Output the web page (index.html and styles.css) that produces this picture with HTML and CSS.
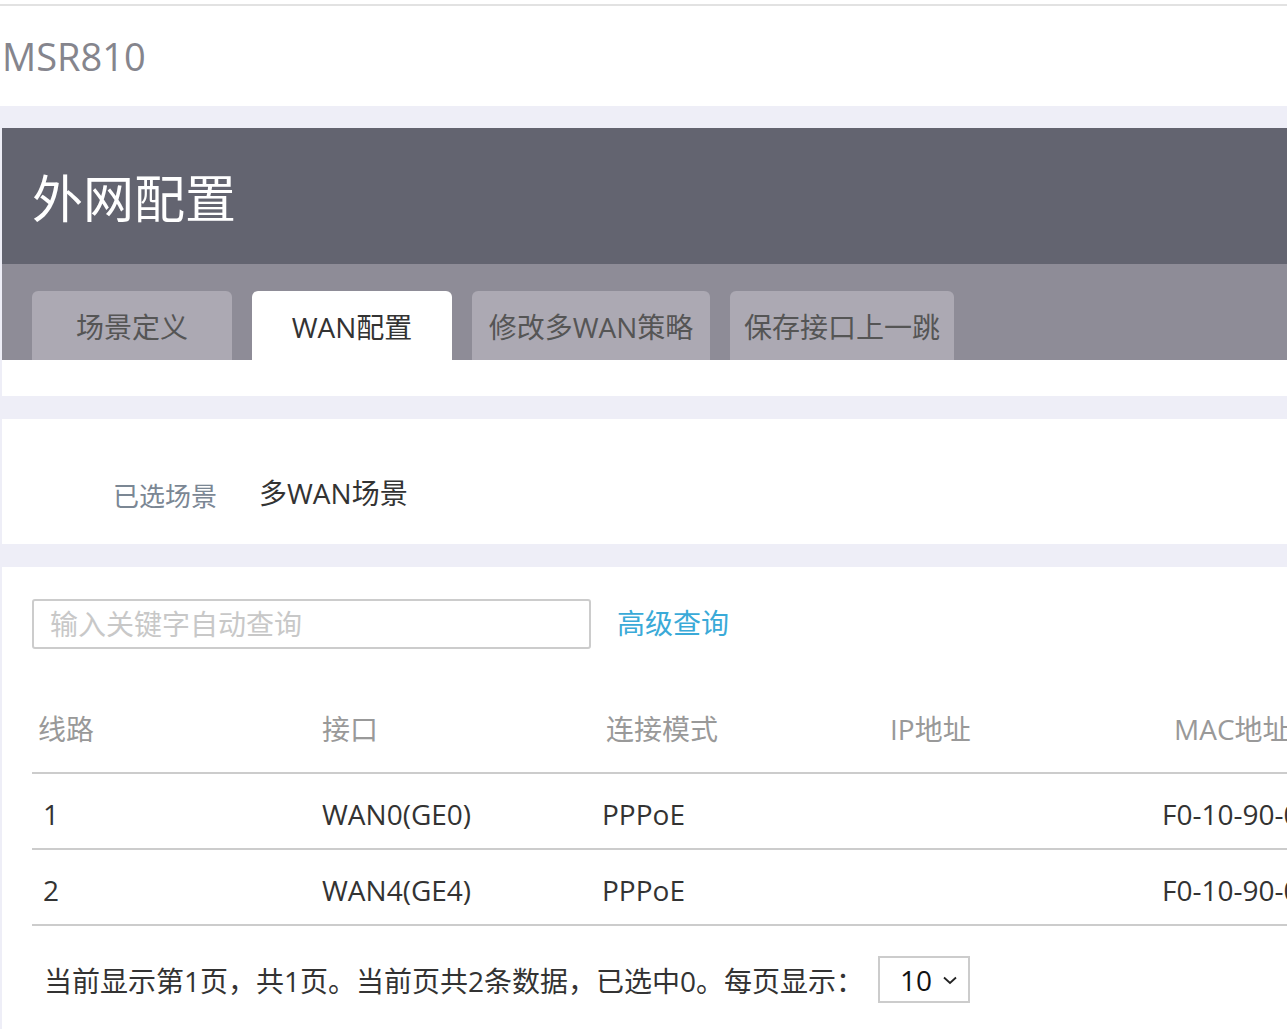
FILE: index.html
```html
<!DOCTYPE html>
<html lang="zh-CN">
<head>
    <meta charset="UTF-8">
    <meta name="viewport" content="width=device-width, initial-scale=1.0">
    <title>MSR810 - 外网配置</title>
    <link rel="stylesheet" href="styles.css">
</head>
<body>
    <div class="topbar">
        <div class="device-name">MSR810</div>
    </div>

    <div class="page">
        <!-- Page header with tabs -->
        <div class="card header-card">
            <div class="page-title">外网配置</div>
            <div class="tab-bar">
                <div class="tab">场景定义</div>
                <div class="tab active">WAN配置</div>
                <div class="tab wide">修改多WAN策略</div>
                <div class="tab medium">保存接口上一跳</div>
            </div>
            <div class="tab-spacer"></div>
        </div>

        <!-- Selected scene -->
        <div class="card scene-card">
            <span class="scene-label">已选场景</span>
            <span class="scene-value">多WAN场景</span>
        </div>

        <!-- WAN list -->
        <div class="card list-card">
            <div class="search-row">
                <input class="search-input" type="text" placeholder="输入关键字自动查询">
                <a class="adv-search" href="#">高级查询</a>
            </div>

            <table class="wan-table">
                <thead>
                    <tr>
                        <th>线路</th>
                        <th>接口</th>
                        <th>连接模式</th>
                        <th>IP地址</th>
                        <th>MAC地址</th>
                        <th>状态</th>
                    </tr>
                </thead>
                <tbody>
                    <tr>
                        <td class="num">1</td>
                        <td>WAN0(GE0)</td>
                        <td class="mode">PPPoE</td>
                        <td></td>
                        <td class="mac">F0-10-90-00-00-01</td>
                        <td></td>
                    </tr>
                    <tr>
                        <td class="num">2</td>
                        <td>WAN4(GE4)</td>
                        <td class="mode">PPPoE</td>
                        <td></td>
                        <td class="mac">F0-10-90-00-00-05</td>
                        <td></td>
                    </tr>
                </tbody>
            </table>

            <div class="pager">
                <span>当前显示第1页，共1页。当前页共2条数据，已选中0。每页显示：</span>
                <div class="page-size">
                    <span>10</span>
                    <svg width="16" height="10" viewBox="0 0 16 10">
                        <path d="M2 2.5 L8 8 L14 2.5" fill="none" stroke="#222" stroke-width="1.8"/>
                    </svg>
                </div>
            </div>
        </div>
    </div>
</body>
</html>
```

FILE: styles.css
```css
html, body {
    overflow: hidden;
}

body {
    margin: 0;
    background-color: #eeeef7;
    font-family: "Open Sans", "Noto Sans CJK SC", sans-serif;
    color: #333;
}

.topbar {
    background-color: #fff;
    padding-top: 4px;
}

.device-name {
    border-top: 2px solid #e2e2e2;
    height: 100px;
    line-height: 100px;
    padding-left: 2px;
    font-size: 38px;
    color: #85858d;
}

.page {
    padding: 22px 0 0 2px;
    display: flex;
    flex-direction: column;
    gap: 23px;
    width: 1900px;
}

.card {
    background-color: #fff;
}

/* header card */
.page-title {
    background-color: #636470;
    color: #fff;
    height: 136px;
    line-height: 140px;
    padding-left: 30px;
    font-size: 51px;
}

.tab-bar {
    background-color: #8e8c97;
    height: 96px;
    padding: 27px 0 0 30px;
    box-sizing: border-box;
    display: flex;
    gap: 20px;
}

.tab {
    width: 200px;
    height: 69px;
    line-height: 72px;
    text-align: center;
    background-color: #aca9b3;
    border-radius: 6px 6px 0 0;
    font-size: 28px;
    color: #555;
}

.tab.active {
    background-color: #fff;
    color: #333;
}

.tab.wide {
    width: 238px;
}

.tab.medium {
    width: 224px;
}

.tab-spacer {
    height: 36px;
}

/* selected scene */
.scene-card {
    height: 125px;
    display: flex;
    align-items: center;
    padding: 20px 0 0 111px;
    box-sizing: border-box;
    gap: 42px;
}

.scene-label {
    font-size: 26px;
    color: #7b8794;
    padding-top: 6px;
}

.scene-value {
    font-size: 28px;
    color: #333;
}

/* list */
.list-card {
    padding: 32px 0 40px 30px;
}

.search-row {
    display: flex;
    align-items: center;
    gap: 26px;
}

.search-input {
    width: 559px;
    height: 50px;
    box-sizing: border-box;
    border: 2px solid #ccc;
    border-radius: 3px;
    padding: 0 16px;
    font-family: inherit;
    font-size: 28px;
    color: #333;
    outline: none;
}

.search-input::placeholder {
    color: #c8c8c8;
}

.adv-search {
    font-size: 28px;
    color: #3aaad8;
    text-decoration: none;
    margin-top: -4px;
}

.wan-table {
    margin-top: 35px;
    border-collapse: collapse;
    table-layout: fixed;
    width: 1704px;
}

.wan-table th,
.wan-table td {
    width: 272px;
    text-align: left;
    padding: 0 6px;
    font-size: 28px;
}

.wan-table th {
    height: 88px;
    font-weight: normal;
    color: #999;
    border-bottom: 2px solid #ccc;
}

.wan-table td {
    height: 68px;
    padding-top: 6px;
    border-bottom: 2px solid #ccc;
    color: #333;
}

.wan-table td.num {
    padding-left: 11px;
}

.wan-table td.mode {
    padding-left: 2px;
}

.wan-table td.mac {
    padding-left: 0;
    text-indent: -6px;
}

.pager {
    display: flex;
    align-items: center;
    padding: 30px 0 0 12px;
    font-size: 28px;
    color: #333;
}

.page-size {
    margin-left: 14px;
    width: 92px;
    height: 47px;
    box-sizing: border-box;
    border: 2px solid #ccc;
    display: flex;
    align-items: center;
    justify-content: flex-end;
    gap: 10px;
    padding-right: 10px;
    font-size: 28px;
    color: #111;
}
```
